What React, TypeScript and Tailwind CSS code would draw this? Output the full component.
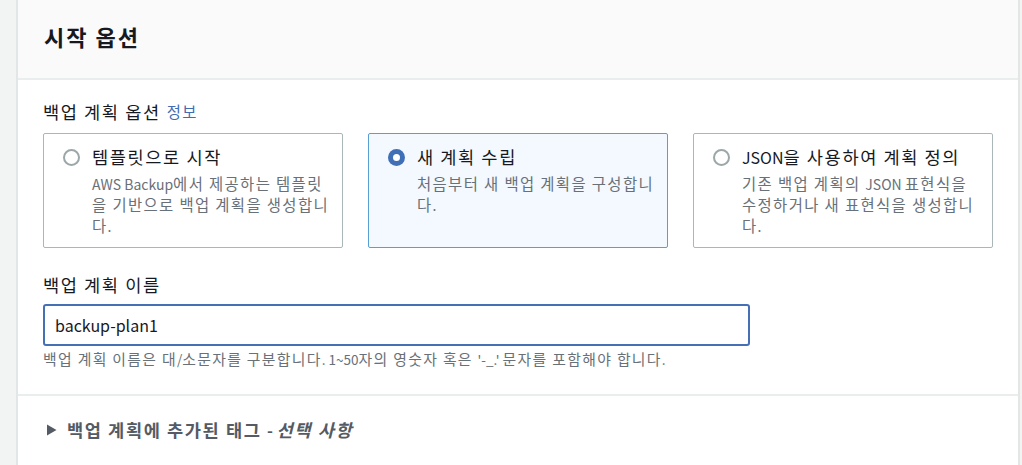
import React, { useState } from 'react';

const font = { fontFamily: '"Noto Sans CJK KR", "Noto Sans", sans-serif' };

// Hangul runs are set a little larger and wider than the Latin text around them
function K({ children }: { children: string }) {
  const parts = children.split(/([\uAC00-\uD7A3][\uAC00-\uD7A3\s]*)/);
  return (
    <>
      {parts.map((p, i) =>
        /[\uAC00-\uD7A3]/.test(p) ? (
          <span key={i} className="text-[1.1em] tracking-[0.09em]">
            {p}
          </span>
        ) : (
          <React.Fragment key={i}>{p}</React.Fragment>
        )
      )}
    </>
  );
}

type Option = {
  id: string;
  title: string;
  desc: string;
};

const options: Option[] = [
  { id: 'template', title: '템플릿으로 시작', desc: 'AWS Backup에서 제공하는 템플릿을 기반으로 백업 계획을 생성합니다.' },
  { id: 'new', title: '새 계획 수립', desc: '처음부터 새 백업 계획을 구성합니다.' },
  { id: 'json', title: 'JSON을 사용하여 계획 정의', desc: '기존 백업 계획의 JSON 표현식을 수정하거나 새 표현식을 생성합니다.' },
];

function Radio({ checked }: { checked: boolean }) {
  if (checked) {
    return (
      <span className="mt-[3px] flex h-[17px] w-[17px] shrink-0 items-center justify-center rounded-full bg-[#3f6fb6]">
        <span className="h-[7px] w-[7px] rounded-full bg-white" />
      </span>
    );
  }
  return <span className="mt-[3px] h-[17px] w-[17px] shrink-0 rounded-full border-2 border-[#9ba7a8] bg-white" />;
}

function Tile({ opt, checked, onSelect }: { opt: Option; checked: boolean; onSelect: () => void }) {
  return (
    <button
      type="button"
      onClick={onSelect}
      className={`flex h-[115px] w-[300px] items-start gap-[12px] rounded-[2px] border pl-[19px] pr-[10px] pt-[12px] text-left ${
        checked ? 'border-[#5a9fd3] bg-[#f3f9fe]' : 'border-[#aab7b8] bg-white'
      }`}
    >
      <Radio checked={checked} />
      <div className="min-w-0">
        <div className="text-[16px] leading-[22px] text-[#16191f]">
          <K>{opt.title}</K>
        </div>
        <div className="mt-[5px] text-[14px] leading-[20px] text-[#687078]">
          <K>{opt.desc}</K>
        </div>
      </div>
    </button>
  );
}

export default function App() {
  const [selected, setSelected] = useState('new');
  const [name, setName] = useState('backup-plan1');

  return (
    <div className="flex h-[465px] w-full overflow-hidden bg-[#f2f3f3]" style={font}>
      <div className="ml-[16px] mr-[2px] flex flex-1 flex-col border-x-2 border-[#e3e6e6] bg-white">
        <div className="flex h-[80px] shrink-0 items-center border-b-2 border-[#eaeded] bg-[#fafafa] px-[26px]">
          <h2 className="-mt-[4px] text-[20px] font-bold leading-[28px] text-[#16191f]">
            <K>시작 옵션</K>
          </h2>
        </div>

        <div className="px-[25px] pt-[20px]">
          <div className="flex items-center gap-[6px] text-[16px] leading-[22px] text-[#16191f]">
            <span>
              <K>백업 계획 옵션</K>
            </span>
            <span className="text-[14px] text-[#3f6db3]">
              <K>정보</K>
            </span>
          </div>

          <div className="mt-[10px] flex gap-[25px]">
            {options.map((o) => (
              <Tile key={o.id} opt={o} checked={selected === o.id} onSelect={() => setSelected(o.id)} />
            ))}
          </div>

          <div className="mt-[26px] text-[16px] leading-[22px] text-[#16191f]">
            <K>백업 계획 이름</K>
          </div>
          <input
            value={name}
            onChange={(e) => setName(e.target.value)}
            className="mt-[8px] h-[42px] w-[707px] rounded-[3px] border-2 border-[#4570b6] px-[10px] text-[16px] text-[#16191f] outline-none"
            style={font}
          />
          <div className="mt-[3px] text-[13.5px] leading-[20px] text-[#687078]">
            <K>백업 계획 이름은 대/소문자를 구분합니다. 1~50자의 영숫자 혹은 '-_.' 문자를 포함해야 합니다.</K>
          </div>
        </div>

        <div className="mt-[25px] border-t-2 border-[#eaeded]" />

        <div className="flex items-center gap-[10px] px-[28px] pt-[23px]">
          <svg width="11" height="12" viewBox="0 0 11 12" className="shrink-0">
            <path d="M1 0.5 L10.5 6 L1 11.5 Z" fill="#545b64" />
          </svg>
          <span className="text-[16px] font-bold leading-[22px] text-[#545b64]">
            <K>백업 계획에 추가된 태그 - </K>
            <i>
              <K>선택 사항</K>
            </i>
          </span>
        </div>
      </div>
    </div>
  );
}
